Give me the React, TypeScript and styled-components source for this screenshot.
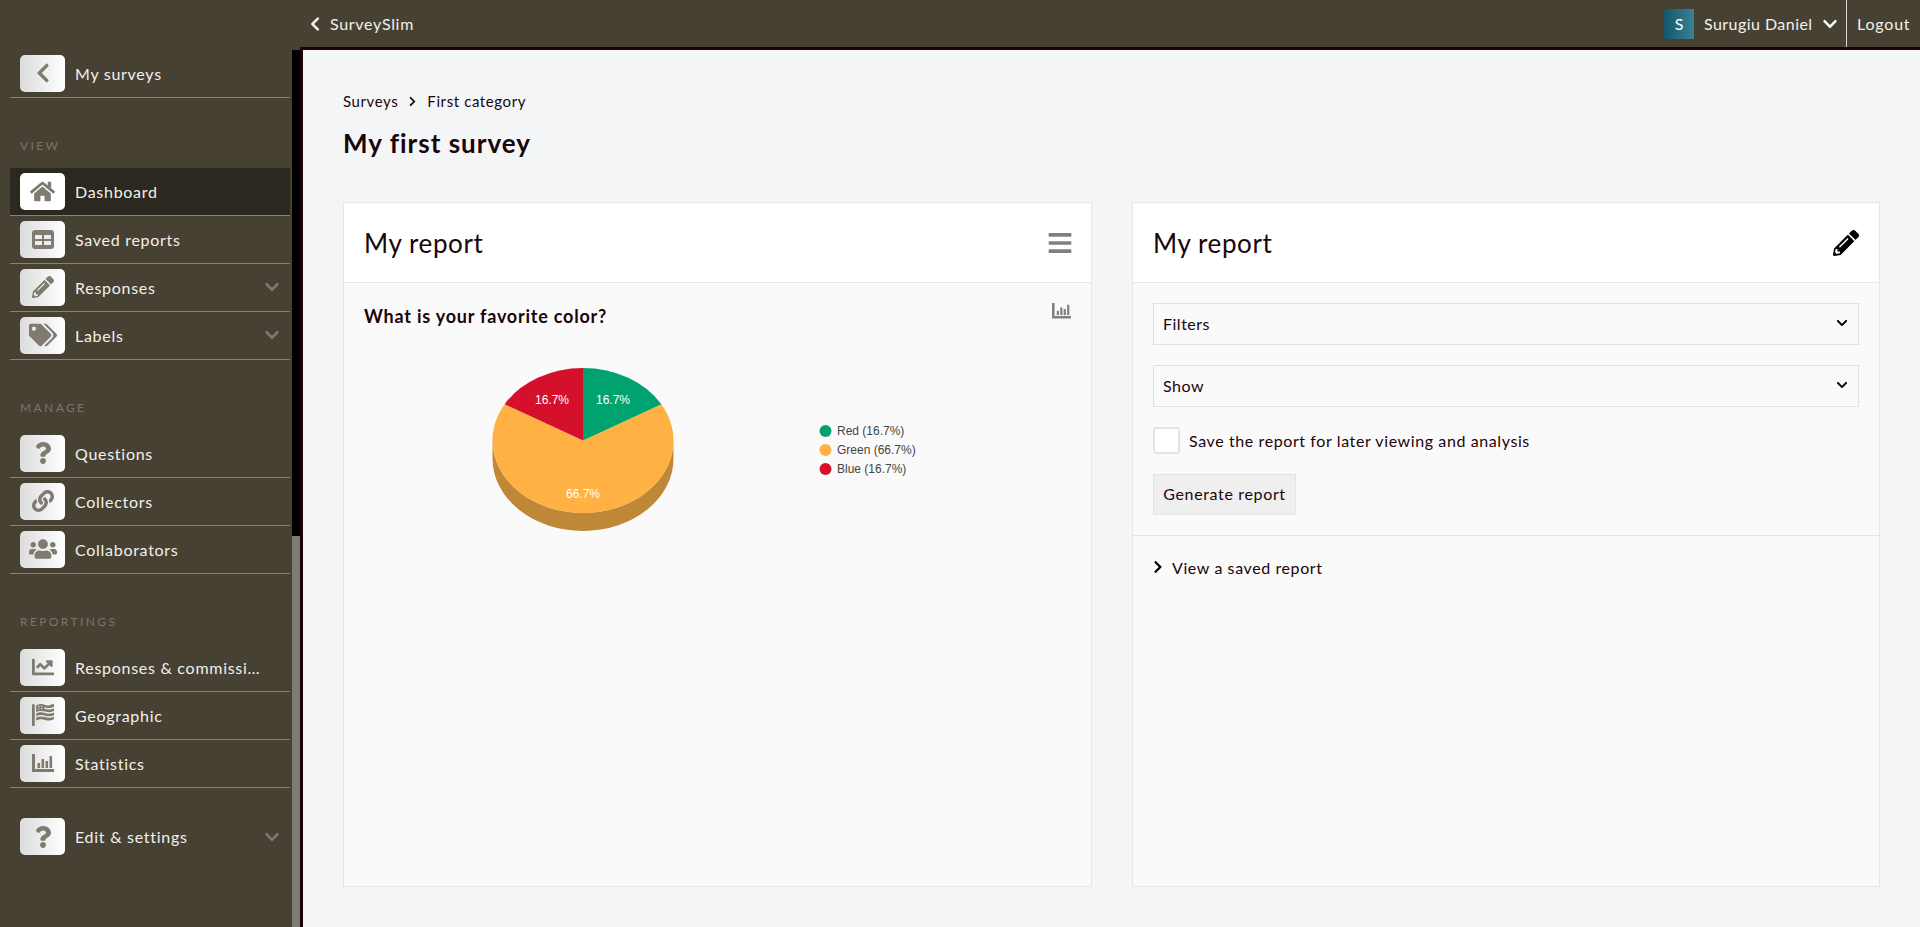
import React from "react";
import styled, { createGlobalStyle } from "styled-components";
import {
  FaChevronLeft,
  FaChevronDown,
  FaChevronRight,
  FaHome,
  FaPencilAlt,
  FaTags,
  FaQuestion,
  FaLink,
  FaUsers,
  FaChartLine,
  FaFlagUsa,
  FaBars,
} from "react-icons/fa";

const INK = "#1a0509";

const Global = createGlobalStyle`
  html, body { margin: 0; padding: 0; height: 100%; overflow: hidden; }
  body { font-family: "Lato", "Noto Sans", sans-serif; font-size: 16px; color: ${INK}; background: #474134; }
  * { box-sizing: border-box; }
`;

const Page = styled.div`
  height: 927px;
  display: flex;
  flex-direction: column;
  background: #474134;
`;

const TopBar = styled.header`
  height: 47px;
  flex: none;
  display: flex;
  align-items: center;
  padding-left: 307px;
  color: #f2f0ea;
`;

const Brand = styled.div`
  display: flex;
  align-items: center;
  gap: 7px;
  font-size: 16px;
  letter-spacing: 0.7px;
  flex: 1;
`;

const Avatar = styled.div`
  width: 30px;
  height: 30px;
  background: linear-gradient(90deg, #12566b, #3a8296);
  display: flex;
  align-items: center;
  justify-content: center;
  font-size: 16px;
  color: #fff;
`;

const UserName = styled.div`
  margin-left: 10px;
  font-size: 16px;
  letter-spacing: 0.45px;
  width: 108px;
  white-space: nowrap;
`;

const UserChevron = styled.div`
  margin-left: 10px;
  width: 24px;
  display: flex;
  font-size: 16px;
  color: #fff;
`;

const Logout = styled.div`
  height: 47px;
  width: 74px;
  border-left: 1px solid #d8d6cf;
  display: flex;
  align-items: center;
  padding-left: 10px;
  font-size: 16px;
  letter-spacing: 0.8px;
`;

const Body = styled.div`
  flex: 1;
  min-height: 0;
  display: flex;
`;

const Sidebar = styled.nav`
  width: 292px;
  flex: none;
  padding: 3px 2px 0 10px;
`;

const SectionLabel = styled.div`
  height: 22px;
  margin: 37px 0 11px;
  padding-left: 10px;
  line-height: 22px;
  font-size: 12px;
  letter-spacing: 2.4px;
  color: #78766b;
  text-transform: uppercase;
`;

const Row = styled.div<{ $active?: boolean; $plain?: boolean; $gapTop?: boolean }>`
  height: 48px;
  display: flex;
  align-items: center;
  padding: 0 10px 1px;
  gap: 10px;
  margin-top: ${(p) => (p.$gapTop ? "25px" : "0")};
  background: ${(p) => (p.$active ? "#2b2820" : "transparent")};
  border-bottom: ${(p) => (p.$plain ? "0" : "1px solid #85837a")};
  color: #f2f0ea;
`;

const Tile = styled.div<{ $active?: boolean }>`
  width: 45px;
  height: 37px;
  flex: none;
  border-radius: 5px;
  display: flex;
  align-items: center;
  justify-content: center;
  color: #7f7b70;
  font-size: 22px;
  background: ${(p) => (p.$active ? "#fff" : "linear-gradient(90deg, #dcdcdc, #fff)")};
`;

const RowText = styled.span`
  flex: 1;
  min-width: 0;
  max-width: 194px;
  font-size: 16px;
  letter-spacing: 0.72px;
  white-space: nowrap;
  overflow: hidden;
  text-overflow: ellipsis;
`;

const RowChevron = styled.span`
  display: flex;
  margin-left: auto;
  font-size: 16px;
  color: #7f7c73;
`;

const Track = styled.div`
  width: 8px;
  flex: none;
  margin-top: 3px;
  background: #000;
  display: flex;
  flex-direction: column;
  justify-content: flex-end;
`;

const Thumb = styled.div`
  height: 391px;
  background: #7e7c72;
`;

const Main = styled.main`
  flex: 1;
  min-width: 0;
  background: #f4f5f7;
  border-top: 3px solid ${INK};
  border-left: 3px solid ${INK};
  padding: 40px 40px 0;
`;

const Crumbs = styled.div`
  height: 22px;
  display: flex;
  align-items: center;
  gap: 9px;
  font-size: 15px;
  letter-spacing: 0.6px;
`;

const CrumbArrow = styled.span`
  display: flex;
  font-size: 11px;
`;

const PageTitle = styled.h1`
  margin: 13px 0 41px;
  height: 36px;
  line-height: 36px;
  font-size: 26px;
  font-weight: 700;
  letter-spacing: 1px;
`;

const Cards = styled.div`
  display: grid;
  grid-template-columns: 1fr 1fr;
  gap: 40px;
`;

const Card = styled.section`
  height: 685px;
  display: flex;
  flex-direction: column;
  border: 1px solid #e6e6e6;
  background: #fafafa;
`;

const CardHeader = styled.div`
  height: 80px;
  flex: none;
  display: flex;
  align-items: center;
  justify-content: space-between;
  padding: 0 20px;
  background: #fff;
  border-bottom: 1px solid #e6e6e6;
`;

const CardTitle = styled.h2`
  margin: 0;
  font-size: 26px;
  font-weight: 400;
  letter-spacing: 0.6px;
`;

const HeaderIcon = styled.span<{ $dark?: boolean }>`
  display: flex;
  font-size: 26px;
  color: ${(p) => (p.$dark ? "#000" : "#808080")};
  margin-right: ${(p) => (p.$dark ? "0" : "-2px")};
`;

const ChartIconWrap = styled.span`
  display: flex;
  color: #808080;
`;

const ChartPane = styled.div`
  padding: 20px;
`;

const ChartHead = styled.div`
  height: 26px;
  display: flex;
  justify-content: space-between;
  align-items: flex-start;
`;

const ChartTitle = styled.h3`
  margin: 0;
  line-height: 26px;
  font-size: 18px;
  font-weight: 700;
  letter-spacing: 0.78px;
`;

const ChartSvg = styled.svg`
  display: block;
  margin-top: 22px;
  width: 707px;
  height: 230px;
  font-family: "Liberation Sans", Arial, sans-serif;
  font-size: 12px;
`;

const FormPane = styled.div`
  padding: 20px;
  display: flex;
  flex-direction: column;
  gap: 20px;
  border-bottom: 1px solid #e6e6e6;
`;

const SelectBox = styled.div`
  height: 42px;
  display: flex;
  align-items: center;
  justify-content: space-between;
  padding: 0 10px 2px 9px;
  border: 1px solid #e0e0e0;
  background: #fafafa;
  font-size: 16px;
  letter-spacing: 0.5px;
`;

const SelectArrow = styled.span`
  display: flex;
  font-size: 12px;
  color: #000;
`;

const CheckRow = styled.label`
  height: 27px;
  display: flex;
  align-items: center;
  gap: 9px;
  padding-bottom: 1px;
  font-size: 16px;
  letter-spacing: 0.6px;
`;

const CheckBox = styled.span`
  width: 27px;
  height: 27px;
  flex: none;
  margin-bottom: -1px;
  border: 2px solid #e4e4e4;
  border-radius: 3px;
  background: #fff;
`;

const GenerateButton = styled.button`
  width: 143px;
  height: 41px;
  padding: 0 0 2px;
  border: 1px solid #e3e3e3;
  background: #efefef;
  color: inherit;
  font: inherit;
  font-size: 16px;
  letter-spacing: 0.65px;
`;

const SavedToggle = styled.div`
  padding: 0 20px;
  height: 62px;
  display: flex;
  align-items: center;
  gap: 7px;
  font-size: 16px;
  letter-spacing: 0.6px;
`;

const ToggleArrow = styled.span`
  display: flex;
  font-size: 14px;
  margin-left: -2px;
  color: #000;
`;

const TableIcon = () => (
  <svg width="22" height="19" viewBox="0 0 22 19" fill="none">
    <rect width="22" height="19" rx="3" fill="currentColor" />
    <rect x="3" y="5" width="7" height="4" fill="#eee" />
    <rect x="12" y="5" width="7" height="4" fill="#eee" />
    <rect x="3" y="11" width="7" height="4" fill="#eee" />
    <rect x="12" y="11" width="7" height="4" fill="#eee" />
  </svg>
);

const BarsIcon = ({ size = 22 }: { size?: number }) => (
  <svg width={size} height={size * 0.82} viewBox="0 0 22 18" fill="currentColor">
    <path d="M0 0h3v15h19v3H0z" />
    <rect x="5.5" y="9" width="2.6" height="5" />
    <rect x="9.5" y="5" width="2.6" height="9" />
    <rect x="13.5" y="7" width="2.6" height="7" />
    <rect x="17.5" y="2" width="2.6" height="12" />
  </svg>
);

const Pie = () => {
  const cx = 219;
  const cy = 89.5;
  const rx = 90.5;
  const ry = 72.5;
  const depth = 18;
  const dx = rx * Math.sin(Math.PI / 3);
  const dy = ry * Math.cos(Math.PI / 3);
  return (
    <ChartSvg viewBox="0 0 707 230">
      <path
        d={`M${cx - rx} ${cy}A${rx} ${ry} 0 0 0 ${cx + rx} ${cy}V${cy + depth}A${rx} ${ry} 0 0 1 ${cx - rx} ${cy + depth}Z`}
        fill="#bf8836"
      />
      <path d={`M${cx} ${cy}L${cx + dx} ${cy - dy}A${rx} ${ry} 0 1 1 ${cx - dx} ${cy - dy}Z`} fill="#ffb143" />
      <path d={`M${cx} ${cy}V${cy - ry}A${rx} ${ry} 0 0 1 ${cx + dx} ${cy - dy}Z`} fill="#00a36f" />
      <path d={`M${cx} ${cy}L${cx - dx} ${cy - dy}A${rx} ${ry} 0 0 1 ${cx} ${cy - ry}Z`} fill="#d4102c" />
      <g fill="#fff" textAnchor="middle">
        <text x="188" y="53">16.7%</text>
        <text x="249" y="53">16.7%</text>
        <text x="219" y="147">66.7%</text>
      </g>
      <g fill="#444">
        <circle cx="461.5" cy="80" r="6" fill="#00a36f" />
        <text x="473" y="84">Red (16.7%)</text>
        <circle cx="461.5" cy="99" r="6" fill="#ffb143" />
        <text x="473" y="103">Green (66.7%)</text>
        <circle cx="461.5" cy="118" r="6" fill="#d4102c" />
        <text x="473" y="122">Blue (16.7%)</text>
      </g>
    </ChartSvg>
  );
};

type Item = { label: string; icon: React.ReactNode; chevron?: boolean; active?: boolean };

const NavRow = ({ item, plain, gapTop }: { item: Item; plain?: boolean; gapTop?: boolean }) => (
  <Row $active={item.active} $plain={plain} $gapTop={gapTop}>
    <Tile $active={item.active}>{item.icon}</Tile>
    <RowText>{item.label}</RowText>
    {item.chevron && (
      <RowChevron>
        <FaChevronDown />
      </RowChevron>
    )}
  </Row>
);

const view: Item[] = [
  { label: "Dashboard", icon: <FaHome size={25} />, active: true },
  { label: "Saved reports", icon: <TableIcon /> },
  { label: "Responses", icon: <FaPencilAlt />, chevron: true },
  { label: "Labels", icon: <FaTags size={28} />, chevron: true },
];

const manage: Item[] = [
  { label: "Questions", icon: <FaQuestion /> },
  { label: "Collectors", icon: <FaLink /> },
  { label: "Collaborators", icon: <FaUsers size={28} /> },
];

const reportings: Item[] = [
  { label: "Responses & commissions", icon: <FaChartLine /> },
  { label: "Geographic", icon: <FaFlagUsa /> },
  { label: "Statistics", icon: <BarsIcon /> },
];

export default function App() {
  return (
    <Page>
      <Global />
      <TopBar>
        <Brand>
          <FaChevronLeft size={16} />
          SurveySlim
        </Brand>
        <Avatar>S</Avatar>
        <UserName>Surugiu Daniel</UserName>
        <UserChevron>
          <FaChevronDown />
        </UserChevron>
        <Logout>Logout</Logout>
      </TopBar>
      <Body>
        <Sidebar>
          <NavRow item={{ label: "My surveys", icon: <FaChevronLeft /> }} />
          <SectionLabel>View</SectionLabel>
          {view.map((i) => (
            <NavRow key={i.label} item={i} />
          ))}
          <SectionLabel>Manage</SectionLabel>
          {manage.map((i) => (
            <NavRow key={i.label} item={i} />
          ))}
          <SectionLabel>Reportings</SectionLabel>
          {reportings.map((i) => (
            <NavRow key={i.label} item={i} />
          ))}
          <NavRow item={{ label: "Edit & settings", icon: <FaQuestion />, chevron: true }} plain gapTop />
        </Sidebar>
        <Track>
          <Thumb />
        </Track>
        <Main>
          <Crumbs>
            <span>Surveys</span>
            <CrumbArrow>
              <FaChevronRight />
            </CrumbArrow>
            <span>First category</span>
          </Crumbs>
          <PageTitle>My first survey</PageTitle>
          <Cards>
            <Card>
              <CardHeader>
                <CardTitle>My report</CardTitle>
                <HeaderIcon>
                  <FaBars />
                </HeaderIcon>
              </CardHeader>
              <ChartPane>
                <ChartHead>
                  <ChartTitle>What is your favorite color?</ChartTitle>
                  <ChartIconWrap>
                    <BarsIcon size={19} />
                  </ChartIconWrap>
                </ChartHead>
                <Pie />
              </ChartPane>
            </Card>
            <Card>
              <CardHeader>
                <CardTitle>My report</CardTitle>
                <HeaderIcon $dark>
                  <FaPencilAlt />
                </HeaderIcon>
              </CardHeader>
              <FormPane>
                <SelectBox>
                  Filters
                  <SelectArrow>
                    <FaChevronDown />
                  </SelectArrow>
                </SelectBox>
                <SelectBox>
                  Show
                  <SelectArrow>
                    <FaChevronDown />
                  </SelectArrow>
                </SelectBox>
                <CheckRow>
                  <CheckBox />
                  Save the report for later viewing and analysis
                </CheckRow>
                <GenerateButton>Generate report</GenerateButton>
              </FormPane>
              <SavedToggle>
                <ToggleArrow>
                  <FaChevronRight />
                </ToggleArrow>
                View a saved report
              </SavedToggle>
            </Card>
          </Cards>
        </Main>
      </Body>
    </Page>
  );
}
